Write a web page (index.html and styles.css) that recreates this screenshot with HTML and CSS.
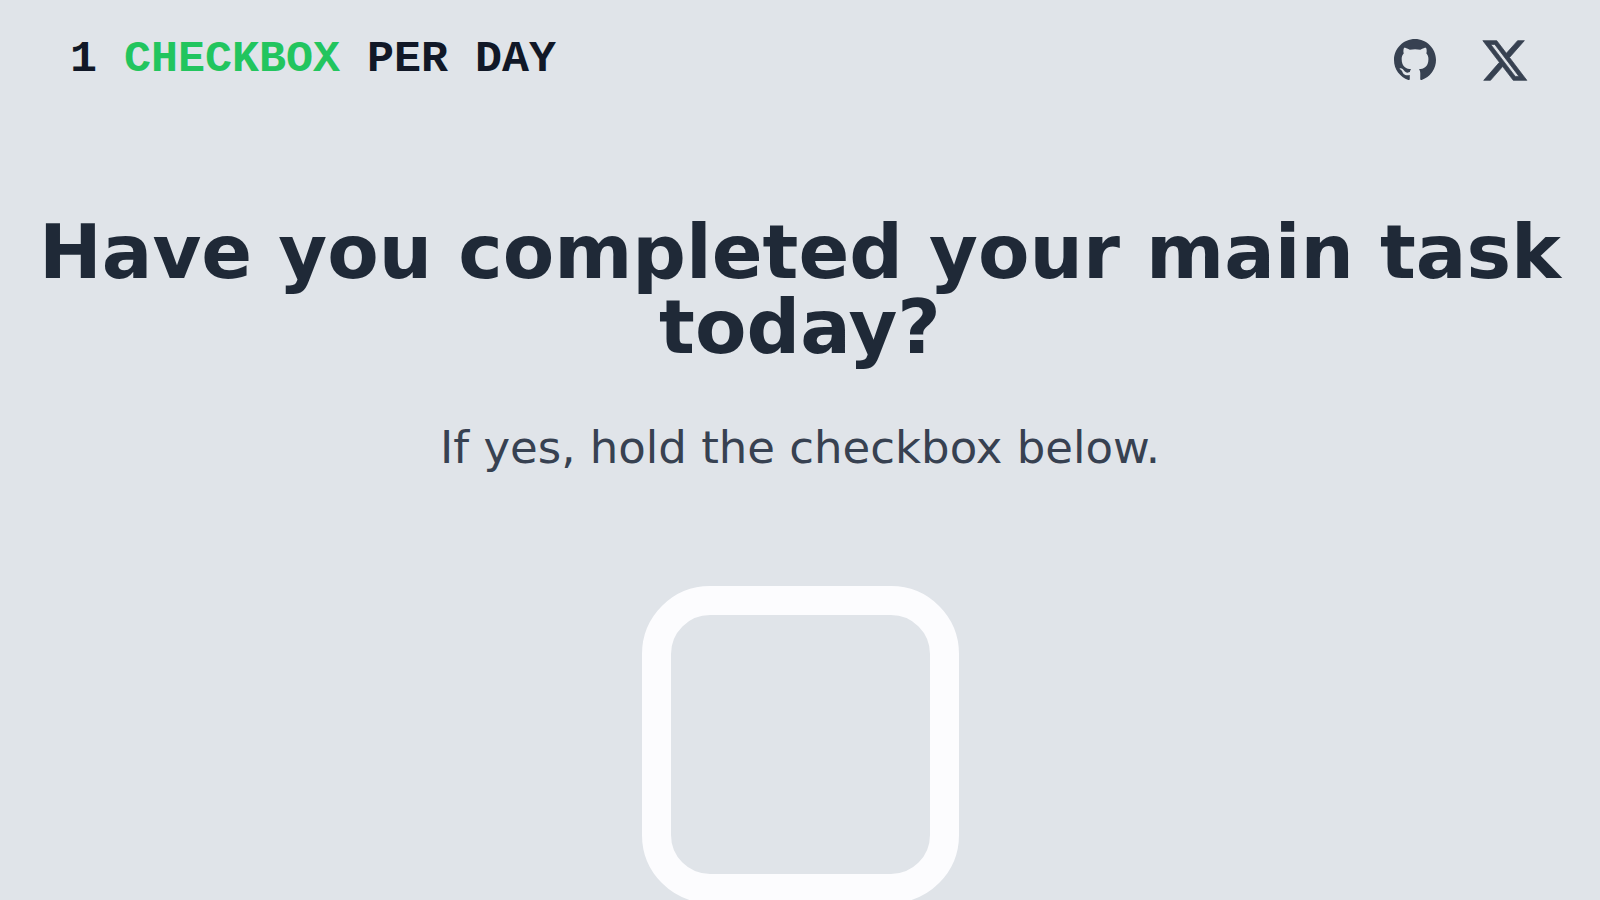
FILE: index.html
```html
<!DOCTYPE html>
<html lang="en">
<head>
<meta charset="utf-8">
<title>1 Checkbox Per Day</title>
<link rel="stylesheet" href="styles.css">
</head>
<body>
<header class="header">
  <div class="brand">1 <span class="accent">CHECKBOX</span> PER DAY</div>
  <nav class="links">
    <a class="link" aria-label="GitHub"><svg class="github" viewBox="0 0 16 16"><path fill="currentColor" d="M8 0C3.58 0 0 3.58 0 8c0 3.54 2.29 6.53 5.47 7.59.4.07.55-.17.55-.38 0-.19-.01-.82-.01-1.49-2.01.37-2.53-.49-2.69-.94-.09-.23-.48-.94-.82-1.13-.28-.15-.68-.52-.01-.53.63-.01 1.08.58 1.23.82.72 1.21 1.87.87 2.33.66.07-.52.28-.87.51-1.07-1.78-.2-3.64-.89-3.64-3.95 0-.87.31-1.59.82-2.15-.08-.2-.36-1.02.08-2.12 0 0 .67-.21 2.2.82.64-.18 1.32-.27 2-.27s1.36.09 2 .27c1.53-1.04 2.2-.82 2.2-.82.44 1.1.16 1.92.08 2.12.51.56.82 1.27.82 2.15 0 3.07-1.87 3.75-3.65 3.95.29.25.54.73.54 1.48 0 1.07-.01 1.93-.01 2.2 0 .21.15.46.55.38A8.01 8.01 0 0 0 16 8c0-4.42-3.58-8-8-8z"/></svg></a>
    <a class="link" aria-label="X"><svg class="x" viewBox="0 0 300 271"><path fill="currentColor" stroke="currentColor" stroke-width="5" d="m236 0h46l-101 115 118 156h-92.6l-72.5-94.8-83 94.8h-46l107-123-113-148h94.9l65.5 86.6zm-16.1 244h25.5l-165-218h-27.4z"/></svg></a>
  </nav>
</header>
<main class="main">
  <h1 class="title">Have you completed your main task today?</h1>
  <p class="subtitle">If yes, hold the checkbox below.</p>
  <button class="checkbox" type="button" aria-label="Hold to complete"></button>
</main>
</body>
</html>
```
FILE: styles.css
```css
body {
  margin: 0;
  height: 900px;
  overflow: hidden;
  background: #e0e4e9;
  font-family: "DejaVu Sans", sans-serif;
}
.header {
  display: flex;
  justify-content: space-between;
  align-items: center;
  height: 120px;
  padding: 0 73px 0 70px;
}
.brand {
  font: bold 45px/60px "Liberation Mono", monospace;
  color: #111827;
}
.accent { color: #22c55e; }
.links { display: flex; gap: 47px; align-items: center; }
.link { display: flex; color: #374151; }
.github { width: 42px; height: 42px; }
.x { width: 44px; height: 41px; overflow: visible; }
.main {
  display: flex;
  flex-direction: column;
  align-items: center;
  padding-top: 95px;
}
.title {
  margin: 0;
  padding: 0 30px;
  font-size: 75px;
  line-height: 75px;
  text-align: center;
  color: #1f2937;
}
.subtitle {
  margin: 51px 0 0;
  font-size: 45px;
  line-height: 64px;
  color: #374151;
}
.checkbox {
  flex: none;
  box-sizing: border-box;
  width: 317px;
  height: 317px;
  margin: 106px 0 0;
  padding: 0;
  border: 29px solid #fcfcfe;
  border-radius: 68px;
  background: transparent;
}
```
